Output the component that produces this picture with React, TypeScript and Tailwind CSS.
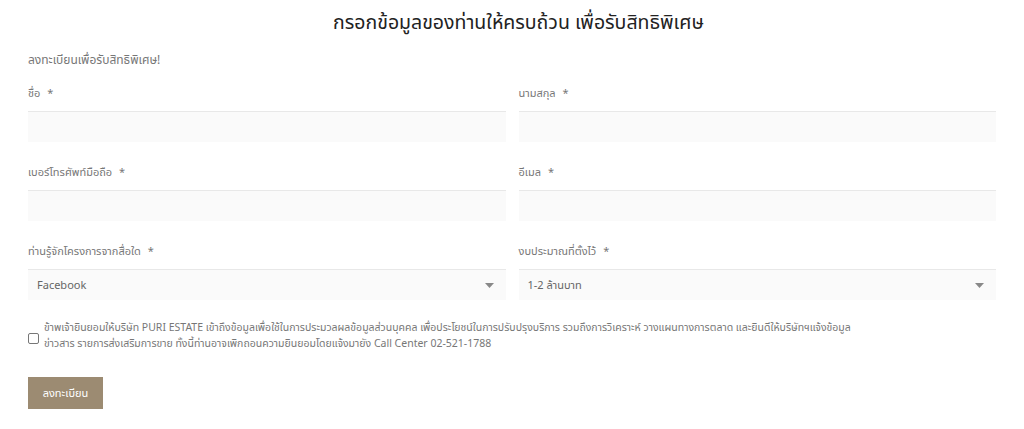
type Field = {
  label: string;
  kind: 'text' | 'select';
  value?: string;
};

const rows: Field[][] = [
  [
    { label: 'ชื่อ', kind: 'text' },
    { label: 'นามสกุล', kind: 'text' },
  ],
  [
    { label: 'เบอร์โทรศัพท์มือถือ', kind: 'text' },
    { label: 'อีเมล', kind: 'text' },
  ],
  [
    { label: 'ท่านรู้จักโครงการจากสื่อใด', kind: 'select', value: 'Facebook' },
    { label: 'งบประมาณที่ตั้งไว้', kind: 'select', value: '1-2 ล้านบาท' },
  ],
];

function FormField({ field }: { field: Field }) {
  return (
    <div className="flex flex-col">
      <label className="h-[18px] overflow-visible text-[11px] leading-[18px] text-[#777]">
        {field.label} <span className="ml-1">*</span>
      </label>
      <div className="mt-[9px] flex h-[31px] items-center border-t border-[#e8e8e8] bg-[#fafafa] px-[9px]">
        {field.kind === 'select' ? (
          <>
            <span className="flex-1 text-[11px] leading-[16px] text-[#666]">{field.value}</span>
            <svg width="9" height="5" viewBox="0 0 9 5" className="mr-[3px]">
              <path d="M0 0h9L4.5 5z" fill="#888" />
            </svg>
          </>
        ) : null}
      </div>
    </div>
  );
}

export default function App() {
  return (
    <div
      className="min-h-[429px] bg-white px-[28px]"
      style={{ fontFamily: '"Noto Sans", "Noto Sans Thai", "Liberation Sans", sans-serif' }}
    >
      <h2 className="pl-[13px] pt-[8px] text-center text-[19.5px] leading-[28px] text-[#222]">
        กรอกข้อมูลของท่านให้ครบถ้วน เพื่อรับสิทธิพิเศษ
      </h2>
      <p className="mt-[16px] h-[16px] text-[12px] leading-[16px] text-[#777]">ลงทะเบียนเพื่อรับสิทธิพิเศษ!</p>

      <div className="mt-[16px] flex w-[968px] flex-col gap-[21px]">
        {rows.map((row, i) => (
          <div key={i} className="grid grid-cols-2 gap-[13px]">
            {row.map((field) => (
              <FormField key={field.label} field={field} />
            ))}
          </div>
        ))}
      </div>

      <div className="mt-[19px] flex items-start gap-[5px]">
        <span className="mt-[14px] h-[11px] w-[11px] shrink-0 rounded-[2px] border border-[#777] bg-white" />
        <p className="text-[10.5px] leading-[16px] text-[#777]">
          <span className="block h-[16px]">
            ข้าพเจ้ายินยอมให้บริษัท PURI ESTATE เข้าถึงข้อมูลเพื่อใช้ในการประมวลผลข้อมูลส่วนบุคคล เพื่อประโยชน์ในการปรับปรุงบริการ รวมถึงการวิเคราะห์ วางแผนทางการตลาด และยินดีให้บริษัทฯแจ้งข้อมูล
          </span>
          <span className="block h-[16px]">
            ข่าวสาร รายการส่งเสริมการขาย ทั้งนี้ท่านอาจเพิกถอนความยินยอมโดยแจ้งมายัง Call Center 02-521-1788
          </span>
        </p>
      </div>

      <button
        type="button"
        className="mt-[26px] h-[32px] w-[75px] bg-[#9c8b72] text-[11px] leading-[16px] text-white"
      >
        ลงทะเบียน
      </button>
    </div>
  );
}
